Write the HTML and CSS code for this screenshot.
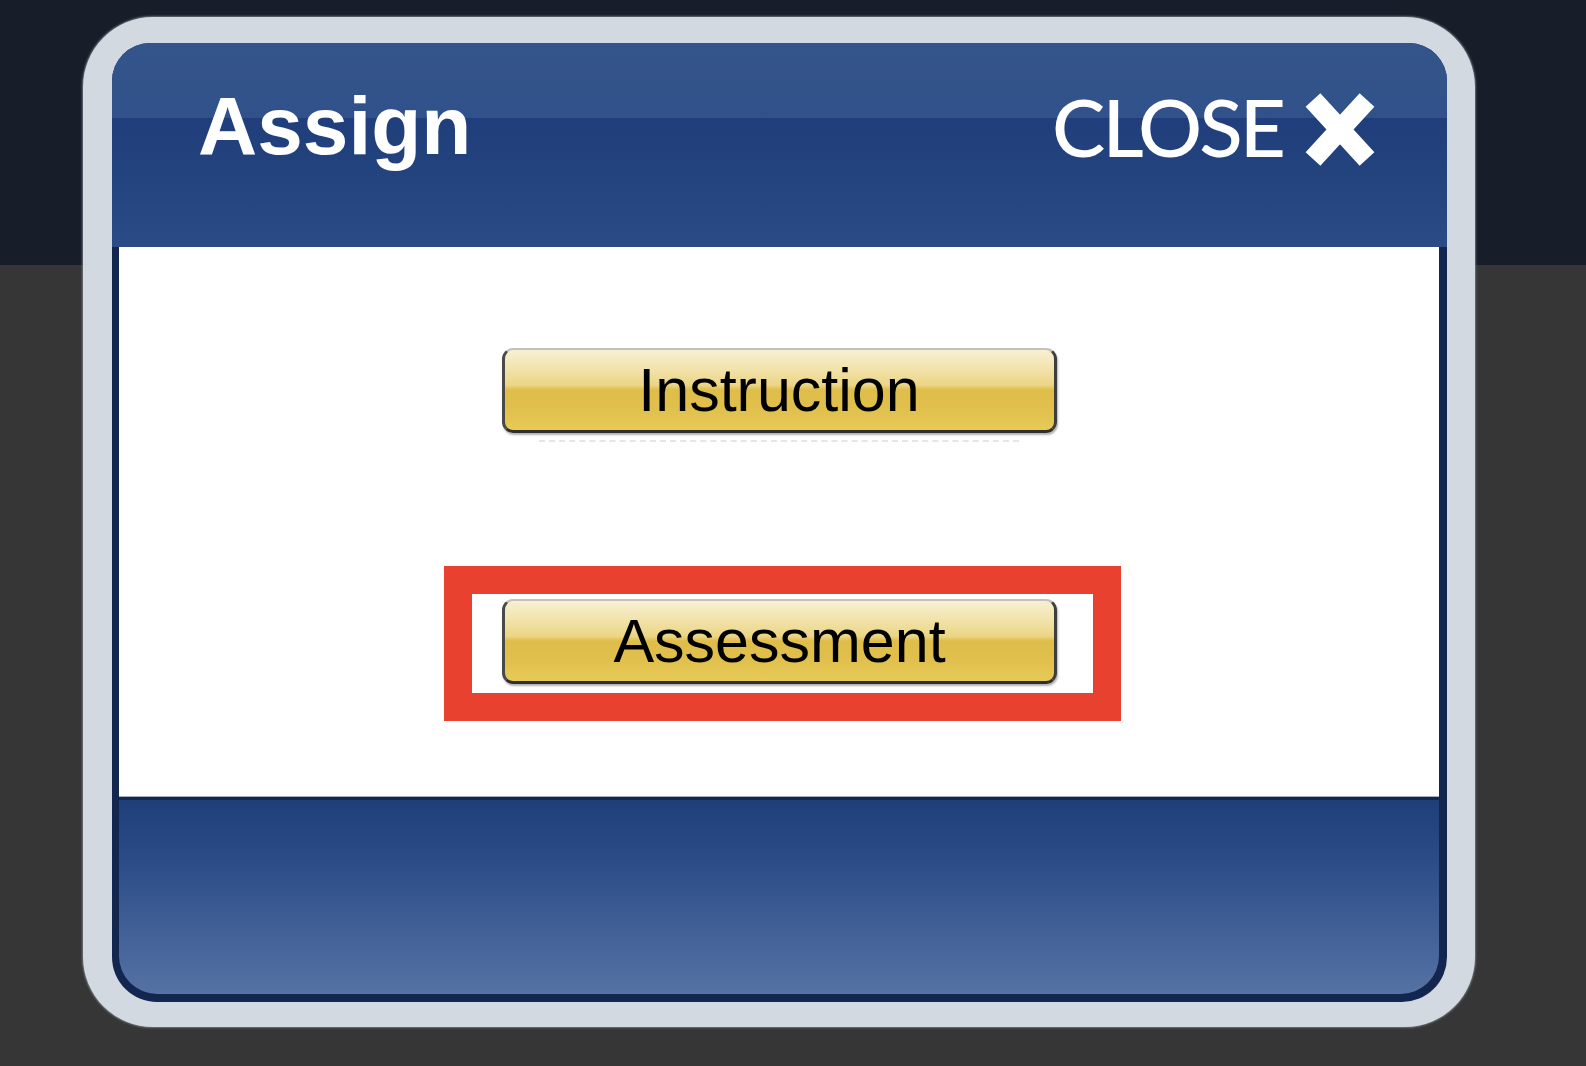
FILE: index.html
```html
<!DOCTYPE html>
<html lang="en">
<head>
<meta charset="utf-8">
<title>Assign</title>
<link rel="stylesheet" href="styles.css">
</head>
<body>
  <div class="dialog">
    <div class="panel">
      <div class="header">
        <div class="title">Assign</div>
        <div class="close">
          <span class="close-label">CLOSE</span>
          <svg class="close-x" width="70" height="75" viewBox="0 0 70 75" aria-hidden="true">
            <path d="M8 8 L62 67 M62 8 L8 67" stroke="#ffffff" stroke-width="20" stroke-linecap="butt" stroke-linejoin="round" fill="none"/>
          </svg>
        </div>
      </div>
      <div class="content">
        <button class="gold-btn">Instruction</button>
        <div class="reflection"></div>
        <div class="highlight">
          <button class="gold-btn">Assessment</button>
        </div>
      </div>
      <div class="footer"></div>
    </div>
  </div>
</body>
</html>
```
FILE: styles.css
```css
html {
  background: #363636;
}

body {
  margin: 0;
  min-height: 1066px;
  background: linear-gradient(to bottom, #181d2a 0, #181d2a 265px, #363636 265px, #363636 100%);
  font-family: "Liberation Sans", Arial, sans-serif;
  overflow: hidden;
}

.dialog {
  box-sizing: border-box;
  width: 1392px;
  height: 1010px;
  margin: 17px 0 0 83px;
  padding: 26px 28px 25px 29px;
  background: #d3d9e1;
  border-radius: 70px;
  box-shadow: 0 0 2px 1px rgba(120, 126, 135, 0.85);
}

.panel {
  display: flex;
  flex-direction: column;
  height: 100%;
  background: #13264f;
  border-radius: 38px 38px 45px 45px;
  overflow: hidden;
}

.header {
  box-sizing: border-box;
  height: 204px;
  flex: none;
  display: flex;
  justify-content: space-between;
  align-items: flex-start;
  padding: 0 72px 0 86px;
  background: linear-gradient(to bottom, #34558b 0, #31518a 75px, #1f3e7b 75px, #24447e 140px, #2b4b86 100%);
}

.title {
  margin-top: 42px;
  font: bold 82px/82px "Liberation Sans", Arial, sans-serif;
  color: #ffffff;
}

.close {
  display: flex;
  align-items: flex-start;
  gap: 22px;
}

.close-label {
  margin-top: 43px;
  font: 500 80px/80px Lato, "Open Sans", sans-serif;
  letter-spacing: -3px;
  color: #ffffff;
}

.close-x {
  display: block;
  margin-top: 49px;
}

.content {
  flex: none;
  height: 550px;
  margin: 0 8px 0 7px;
  background: #ffffff;
  display: flex;
  flex-direction: column;
  align-items: center;
  border-bottom: 1px solid #a9afba;
  box-sizing: border-box;
}

.gold-btn {
  box-sizing: border-box;
  width: 555px;
  height: 85px;
  padding: 0;
  border-style: solid;
  border-width: 2px 3px 3px 3px;
  border-color: #c2c1bb #3e3e3c #2f2f2d #4a4a48;
  border-radius: 11px;
  background: linear-gradient(to bottom, #f8f0d3 0%, #f2e4ad 22%, #ebd585 44%, #dfbd49 50%, #e0bf4c 70%, #e7ca57 100%);
  box-shadow: 1px 2px 2px rgba(0, 0, 0, 0.3);
  font: 400 61px/80px "Liberation Sans", Arial, sans-serif;
  color: #000000;
  text-align: center;
  cursor: pointer;
}

.content > .gold-btn:first-child {
  margin-top: 101px;
}

.reflection {
  width: 480px;
  height: 0;
  margin-top: 7px;
  border-top: 2px dashed #e6e6e6;
}

.highlight {
  margin-top: 124px;
  margin-left: 7px;
  padding: 5px 36px 9px 30px;
  border: 28px solid #e8412f;
  background: #ffffff;
}

.highlight .gold-btn {
  display: block;
}

.footer {
  flex: none;
  height: 194px;
  margin: 3px 8px 8px 7px;
  border-radius: 0 0 38px 38px;
  background: linear-gradient(to bottom, #1f3f7b 0%, #2a4b86 30%, #3d5c94 60%, #5672a4 100%);
}
```
